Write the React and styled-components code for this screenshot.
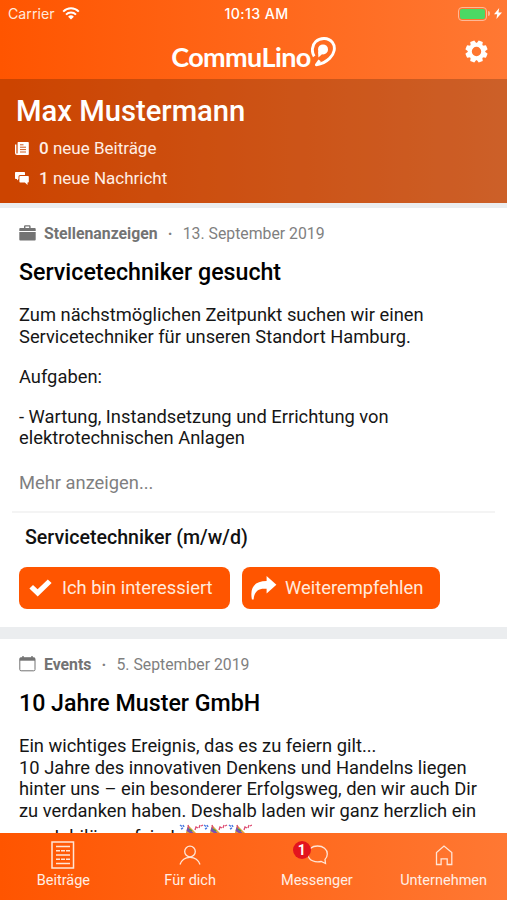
import React from 'react';
import styled, { createGlobalStyle } from 'styled-components';

const App = () => {
  return (
    <Phone>
      <GlobalStyle />
      <StatusBar>
        <Carrier>
          Carrier
          <svg width="18" height="13" viewBox="0 0 18 13" fill="none" stroke="#fff" strokeWidth="2">
            <path d="M1.2 4.6a11 11 0 0 1 15.6 0" />
            <path d="M4 7.6a7.1 7.1 0 0 1 10 0" />
            <path d="M9 12.6L6.1 9.8a4.1 4.1 0 0 1 5.8 0z" fill="#fff" stroke="none" />
          </svg>
        </Carrier>
        <Clock>10:13 AM</Clock>
        <Battery>
          <BatteryShell>
            <BatteryLevel />
          </BatteryShell>
          <BatteryTip />
          <svg width="8" height="11" viewBox="0 0 8 11" fill="#fff">
            <path d="M5.2 0L0 6.2h3.2L2.4 11 8 4.6H4.5z" />
          </svg>
        </Battery>
      </StatusBar>
      <TopBar>
        <Logo>
          <LogoText>CommuLino</LogoText>
          <svg width="26" height="31" viewBox="0 0 26 31" fill="none" stroke="#fff">
            <path
              d="M3.2 20.4C.4 16 .8 9.4 4.6 5.800 9.400 1.200 17.400 1.400 21.400 6.400 25 11.200 23.400 17.800 18.600 22.400 15 25.800 10.200 28 5.400 28.800L8.600 24.400"
              strokeWidth="2.9"
              strokeLinejoin="round"
            />
            <circle cx="12" cy="13.4" r="5" fill="#fff" stroke="none" />
            <path d="M7 15L7.400 21.400 11 18.300z" fill="#fff" stroke="none" />
          </svg>
        </Logo>
        <GearIcon />
      </TopBar>
      <Profile>
        <h1>Max Mustermann</h1>
        <ProfileRow>
          <NewsIcon />
          <p>
            <b>0</b> neue Beiträge
          </p>
        </ProfileRow>
        <ProfileRow>
          <ChatsIcon />
          <p>
            <b>1</b> neue Nachricht
          </p>
        </ProfileRow>
      </Profile>
      <Feed>
        <Post>
          <PostMeta>
            <BriefcaseIcon />
            <b>Stellenanzeigen</b>
            <i>·</i>
            <span>13. September 2019</span>
          </PostMeta>
          <PostTitle>Servicetechniker gesucht</PostTitle>
          <PostText>
            <p>
              Zum nächstmöglichen Zeitpunkt suchen wir einen
              <br />
              Servicetechniker für unseren Standort Hamburg.
            </p>
            <p>Aufgaben:</p>
            <p>
              - Wartung, Instandsetzung und Errichtung von
              <br />
              elektrotechnischen Anlagen
            </p>
          </PostText>
          <MoreLink>Mehr anzeigen...</MoreLink>
          <Offer>
            <h3>Servicetechniker (m/w/d)</h3>
            <OfferActions>
              <ActionButton $width={211} $gap={10}>
                <svg width="23" height="18" viewBox="0 0 23 18" fill="#fff">
                  <path d="M.4 9.6L4 6l4.6 4.3L18.8.5 22.6 4 8.7 17.6z" />
                </svg>
                Ich bin interessiert
              </ActionButton>
              <ActionButton $width={198} $gap={8} $left={8}>
                <svg width="27" height="24" viewBox="0 0 27 24" fill="#fff">
                  <path d="M16.6 0L26.4 8.8 16.6 17.4v-4.6C9.5 12 4.6 14 3.6 23.4H1.9C-.4 11.4 4.6 5 16.6 5z" />
                </svg>
                Weiterempfehlen
              </ActionButton>
            </OfferActions>
          </Offer>
        </Post>
        <Post>
          <PostMeta>
            <CalendarIcon />
            <b>Events</b>
            <i>·</i>
            <span>5. September 2019</span>
          </PostMeta>
          <PostTitle>10 Jahre Muster GmbH</PostTitle>
          <PostText>
            <p>
              Ein wichtiges Ereignis, das es zu feiern gilt...
              <br />
              10 Jahre des innovativen Denkens und Handelns liegen
              <br />
              hinter uns – ein besonderer Erfolgsweg, den wir auch Dir
              <br />
              zu verdanken haben. Deshalb laden wir ganz herzlich ein
            </p>
            <LastLine>
              <span>zur Jubiläumsfeier!</span>
              <PartyPopper />
              <PartyPopper />
              <PartyPopper />
            </LastLine>
          </PostText>
        </Post>
      </Feed>
      <TabBar>
        <Tab>
          <svg width="24" height="28" viewBox="0 0 24 28" fill="none" stroke="#ffe5d6">
            <rect x="1" y="1" width="21.5" height="26" strokeWidth="1.5" />
            <path d="M5 5.5h14M5 14h14M5 22.5h14" strokeWidth="1.4" />
            <path d="M5 9.8h14M5 18.2h14" strokeWidth="1.4" strokeDasharray="4 1" />
          </svg>
          Beiträge
        </Tab>
        <Tab>
          <svg width="24" height="28" viewBox="0 0 24 28" fill="none" stroke="#ffe5d6" strokeWidth="1.3">
            <circle cx="12" cy="10.5" r="5.3" />
            <path d="M2 23.5c1.5-4.5 5.5-7.2 10-7.2s8.5 2.7 10 7.2" />
          </svg>
          Für dich
        </Tab>
        <Tab>
          <MessengerIcon>
            <svg width="24" height="28" viewBox="0 0 24 28" fill="none" stroke="#ffe5d6" strokeWidth="1.3">
              <path d="M12.5 5c5.7 0 9.8 3.3 9.8 7.9 0 2.3-.9 4-2.3 5.5l.5 4.1-4.3-2c-5.5 1.3-13.2-.7-13.2-7.6C3 8.3 6.8 5 12.5 5z" />
            </svg>
            <Badge>1</Badge>
          </MessengerIcon>
          Messenger
        </Tab>
        <Tab>
          <svg width="24" height="28" viewBox="0 0 24 28" fill="none" stroke="#ffe5d6" strokeWidth="1.3">
            <path d="M4.5 23.5V11.5L12 5l7.8 6.5v12h-4.6v-5.7H9.1v5.7z" />
          </svg>
          Unternehmen
        </Tab>
      </TabBar>
    </Phone>
  );
};

const GearIcon = () => (
  <Gear viewBox="-12 -12 24 24" fill="#fff">
    {[0, 45, 90, 135, 180, 225, 270, 315].map((angle) => (
      <path key={angle} transform={`rotate(${angle + 22.5})`} d="M-3.2-8l.9-3.6h4.6l.9 3.6z" />
    ))}
    <circle r="7" fill="none" stroke="#fff" strokeWidth="4.2" />
  </Gear>
);

const NewsIcon = () => (
  <svg width="14" height="13" viewBox="0 0 14 13">
    <path d="M3.2 0h9.8q.8 0 .8.8v11.4q0 .8-.8.8H2Q0 13 0 11V2.5h1.4V11q0 .6.6.6t.6-.6V.8q0-.8.6-.8z" fill="#fff" />
    <path d="M5 2.8h3.5M5 5.2h6M5 7.6h6M5 10h6" stroke="#c94a08" strokeWidth=".9" />
  </svg>
);

const ChatsIcon = () => (
  <svg width="14" height="13" viewBox="0 0 14 13" fill="#fff">
    <path d="M.8 0h8.4q.8 0 .8.8v2.3H5q-1.5 0-1.5 1.5V7L2 8.6V7H.8Q0 7 0 6.2V.8Q0 0 .8 0z" />
    <path d="M5.2 4h7.8q.8 0 .8.8v5q0 .8-.8.8h-.5V13l-2.6-2.4H5.2q-.8 0-.8-.8v-5q0-.8.8-.8z" />
  </svg>
);

const BriefcaseIcon = () => (
  <svg width="17" height="16" viewBox="0 0 17 16" fill="#737373">
    <path d="M5 3V1.5Q5 .3 6.2.3h4.2q1.2 0 1.2 1.2V3h4.2q.9 0 .9.9V6H.3V3.9q0-.9.9-.9zm1.4 0h3.8V1.6H6.4z" />
    <path d="M.3 7h16.4v7.5q0 .9-.9.9H1.2q-.9 0-.9-.9z" />
  </svg>
);

const CalendarIcon = () => (
  <svg width="17" height="16" viewBox="0 0 17 16" fill="none" stroke="#737373">
    <rect x=".8" y="1.8" width="15.2" height="13" rx="1.3" />
    <path d="M.8 3.2h15.2" strokeWidth="3" />
    <path d="M4 0v2M13 0v2" strokeWidth="1.4" />
  </svg>
);

const PartyPopper = () => (
  <svg width="24.5" height="22" viewBox="0 0 24.5 22">
    <path d="M4 20L9 1l8 8z" fill="#e0a63c" />
    <path d="M8.5 3l6 6-2 1-5-3z" fill="#7b4fb5" />
    <path d="M1 1l2 1.5M2 5l2-1M4 1l1 2" stroke="#4c7be0" strokeWidth="1.5" />
    <path d="M9 1l1 3M16 6l1-3 2 1M20 4l1-3M22 2l2-1" stroke="#dd4c72" strokeWidth="1.3" fill="none" />
    <path d="M10 5l3 2" stroke="#3d9a58" strokeWidth="1.5" fill="none" />
  </svg>
);

const GlobalStyle = createGlobalStyle`
  * {
    box-sizing: border-box;
    margin: 0;
    padding: 0;
  }
  body {
    font-family: Roboto, 'Liberation Sans', sans-serif;
    overflow: hidden;
  }
  svg {
    display: block;
    flex-shrink: 0;
  }
`;

const Phone = styled.div`
  display: flex;
  flex-direction: column;
  width: 507px;
  height: 900px;
  background: linear-gradient(90deg, #ff5500, #ff7833);
  overflow: hidden;
`;

const StatusBar = styled.div`
  display: grid;
  grid-template-columns: 1fr auto 1fr;
  align-items: center;
  height: 27px;
  padding: 0 5px 0 8px;
  color: #fff;
  font-family: Inter, sans-serif;
  font-size: 14.2px;
`;

const Carrier = styled.div`
  display: flex;
  align-items: center;
  gap: 7px;
  color: #ffe9dc;
`;

const Clock = styled.div`
  padding-left: 3px;
  font-size: 14.2px;
  font-weight: 500;
  letter-spacing: 0.4px;
`;

const Battery = styled.div`
  display: flex;
  align-items: center;
  justify-content: flex-end;
`;

const BatteryShell = styled.div`
  width: 29px;
  height: 14px;
  padding: 1px;
  border: 1px solid #ffb896;
  border-radius: 4px;
`;

const BatteryLevel = styled.div`
  height: 10px;
  border-radius: 2px;
  background: #4cd964;
`;

const BatteryTip = styled.div`
  width: 2px;
  height: 5px;
  margin: 0 4px 0 1px;
  border-radius: 0 2px 2px 0;
  background: #ffb896;
`;

const TopBar = styled.header`
  display: grid;
  grid-template-columns: 1fr auto 1fr;
  height: 52px;
  padding: 0 19px;
`;

const Logo = styled.div`
  display: flex;
  grid-column: 2;
  padding: 9px 0 0 1px;
`;

const LogoText = styled.div`
  margin-top: 6px;
  color: #fff;
  font-family: Lato, sans-serif;
  font-size: 27px;
  font-weight: 700;
  line-height: 30px;
  letter-spacing: -0.6px;
`;

const Gear = styled.svg`
  justify-self: end;
  width: 23px;
  height: 23px;
  margin-top: 13px;
`;

const Profile = styled.section`
  height: 124px;
  padding: 14px 15px 0;
  background: rgba(0, 0, 0, 0.2);
  color: #fff;
  h1 {
    margin: 0 0 4px 1px;
    font-size: 29.2px;
    font-weight: 500;
    line-height: 36px;
  }
`;

const ProfileRow = styled.div`
  display: flex;
  align-items: center;
  gap: 10px;
  height: 30px;
  color: #ffeee4;
  font-size: 17px;
  b {
    font-weight: 500;
  }
`;

const Feed = styled.main`
  flex: 1;
  min-height: 0;
  background: #ebedef;
  overflow: hidden;
`;

const Post = styled.article`
  height: 419px;
  margin-top: 5px;
  padding: 16px 12px 0;
  background: #fff;
  & + & {
    margin-top: 12px;
  }
`;

const PostMeta = styled.div`
  display: flex;
  align-items: center;
  height: 18px;
  padding-left: 7px;
  color: #7f7f7f;
  font-size: 15.8px;
  b {
    margin-left: 8px;
    color: #737373;
    font-weight: 700;
  }
  i {
    width: 25px;
    font-style: normal;
    font-weight: 700;
    text-align: center;
  }
`;

const PostTitle = styled.h2`
  margin: 13.5px 0 16.5px;
  padding-left: 7px;
  color: #000;
  font-size: 23.2px;
  font-weight: 500;
  line-height: 32px;
`;

const PostText = styled.div`
  padding-left: 7px;
  color: #161616;
  font-size: 18.33px;
  line-height: 21.5px;
  white-space: nowrap;
  p {
    margin-bottom: 18.5px;
  }
`;

const LastLine = styled.div`
  display: flex;
  margin-top: -18px;
  span {
    padding-top: 4px;
    margin-right: 4px;
  }
  svg {
    margin-top: 2px;
  }
`;

const MoreLink = styled.div`
  margin-top: 23px;
  padding-left: 7px;
  color: #7f7f7f;
  font-size: 18.33px;
  line-height: 22px;
`;

const Offer = styled.div`
  margin-top: 17px;
  padding-top: 14px;
  border-top: 2px solid #f4f4f4;
  h3 {
    padding-left: 13px;
    color: #111;
    font-size: 19.6px;
    font-weight: 500;
    line-height: 22px;
  }
`;

const OfferActions = styled.div`
  display: flex;
  gap: 12px;
  margin-top: 18px;
  padding-left: 7px;
`;

const ActionButton = styled.button`
  display: flex;
  align-items: center;
  gap: ${(props) => props.$gap}px;
  width: ${(props) => props.$width}px;
  height: 42px;
  padding: 0 8px 0 ${(props) => props.$left || 10}px;
  border: 0;
  border-radius: 8px;
  background: #ff5500;
  color: #ffe9dc;
  font-family: inherit;
  font-size: 18.35px;
  white-space: nowrap;
`;

const TabBar = styled.nav`
  display: grid;
  grid-template-columns: repeat(4, 1fr);
  height: 67px;
`;

const Tab = styled.div`
  display: flex;
  flex-direction: column;
  align-items: center;
  gap: 2px;
  padding-top: 8px;
  color: #ffeee4;
  font-size: 14.5px;
  line-height: 20px;
`;

const MessengerIcon = styled.div`
  position: relative;
`;

const Badge = styled.span`
  position: absolute;
  top: 0;
  left: -12px;
  width: 18px;
  height: 18px;
  border-radius: 50%;
  background: #e3141e;
  color: #fff;
  font-size: 14px;
  font-weight: 700;
  line-height: 18px;
  text-align: center;
`;

export default App;
